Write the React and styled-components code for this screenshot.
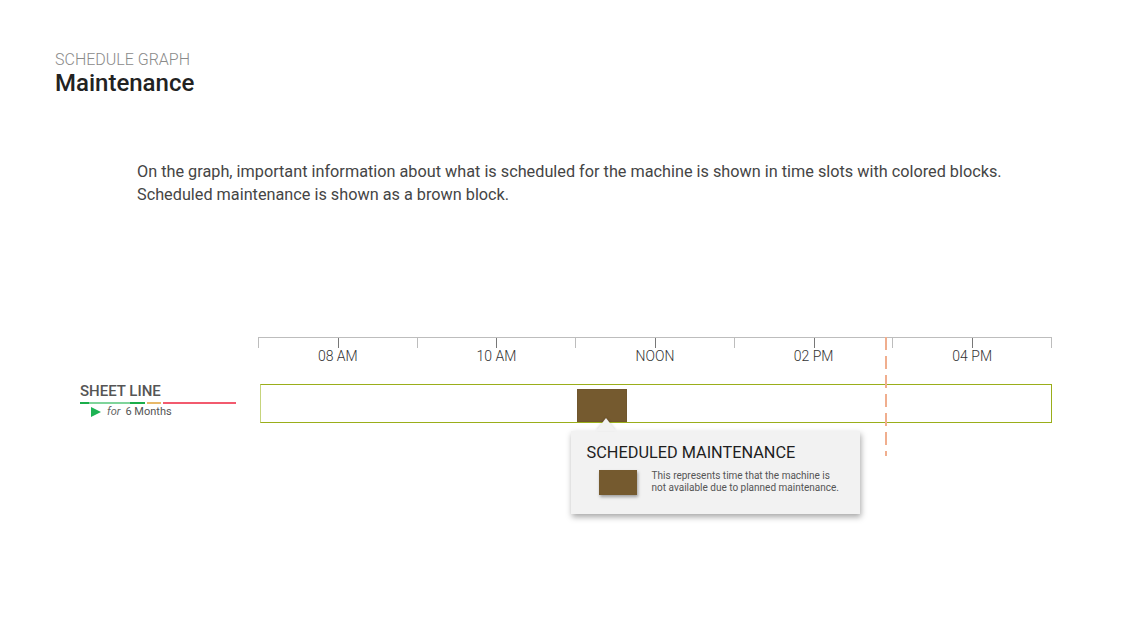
import React from 'react'
import styled, { createGlobalStyle } from 'styled-components'

const GlobalStyle = createGlobalStyle`
    body {
        margin: 0;
        background: #ffffff;
        font-family: Roboto, "Liberation Sans", sans-serif;
    }
`

const Page = styled.div`
    width: 1139px;
    height: 618px;
    padding: 52px 0 0 55px;
    box-sizing: border-box;
    position: relative;
`

const Kicker = styled.div`
    font-size: 16px;
    font-weight: 300;
    color: #8a8a8a;
    line-height: 16px;
`

const Title = styled.h1`
    margin: 3px 0 0;
    font-size: 24px;
    font-weight: 500;
    color: #222;
    line-height: 24px;
`

const Intro = styled.p`
    margin: 65px 0 0 82px;
    font-size: 16.25px;
    line-height: 23px;
    color: #454545;
`

const Chart = styled.div`
    display: flex;
    margin: 131px 0 0 25px;
    position: relative;
`

const LabelCol = styled.div`
    width: 178px;
    padding-top: 46px;
`

const LineName = styled.div`
    font-size: 15px;
    font-weight: 500;
    color: #555;
    line-height: 17px;
    width: 156px;
    padding-bottom: 2px;
`

const Underline = styled.div`
    display: flex;
    gap: 2px;
    height: 2px;
    width: 156px;
`

const Seg = styled.div`
    width: ${p => p.$w}px;
    background: ${p => p.$c};
    position: relative;
`

const SegGlow = styled.div`
    position: absolute;
    left: 9px;
    width: 41px;
    top: 0;
    height: 2px;
    background: #7fd49a;
`

const Duration = styled.div`
    display: flex;
    align-items: center;
    margin: 1px 0 0 11px;
    font-size: 11px;
    color: #555;
    gap: 5px;
`

const Play = styled.span`
    width: 0;
    height: 0;
    border-left: 10px solid #1db354;
    border-top: 5px solid transparent;
    border-bottom: 5px solid transparent;
    margin-right: 1px;
`

const For = styled.i`
    color: #666;
`

const Graph = styled.div`
    width: 794px;
    position: relative;
`

const Axis = styled.div`
    display: flex;
    border-top: 1px solid #bdbdbd;
    border-right: 1px solid #bdbdbd;
    box-sizing: border-box;
    height: 11px;
`

const Slot = styled.div`
    flex: 1;
    position: relative;
    border-left: 1px solid #bdbdbd;
    height: 10px;
`

const CenterTick = styled.div`
    position: absolute;
    left: 50%;
    top: 0;
    width: 1px;
    height: 10px;
    background: #777;
`

const SlotLabel = styled.div`
    position: absolute;
    left: 50%;
    top: 10px;
    transform: translateX(-50%);
    font-size: 14px;
    font-weight: 300;
    color: #333;
    white-space: nowrap;
`

const Row = styled.div`
    margin: 36px 0 0 2px;
    height: 39px;
    box-sizing: border-box;
    border: 1px solid #9aae1a;
    border-left-color: #c6d47c;
    position: relative;
`

const Block = styled.div`
    position: absolute;
    bottom: 0;
    height: 33px;
    background: #755a2f;
    box-shadow: inset 0 0 0 1px rgba(0, 0, 0, 0.04);
`

const NowLine = styled.div`
    position: absolute;
    top: 0;
    width: 2px;
    height: 119px;
    background: repeating-linear-gradient(
        to bottom,
        #f0ae8e 0 13px,
        transparent 13px 19px
    );
`

const Tooltip = styled.div`
    position: absolute;
    top: 94px;
    width: 289px;
    height: 83px;
    box-sizing: border-box;
    background: #f2f2f2;
    box-shadow: 1px 3px 6px rgba(0, 0, 0, 0.35);
    padding: 12px 0 0 16px;
    z-index: 2;

    &::before {
        content: '';
        position: absolute;
        top: -13px;
        left: 25px;
        border-left: 10px solid transparent;
        border-right: 10px solid transparent;
        border-bottom: 13px solid #f2f2f2;
        filter: drop-shadow(0 -1px 1px rgba(0, 0, 0, 0.12));
    }
`

const TipTitle = styled.div`
    font-size: 16.3px;
    color: #1e1e1e;
    line-height: 19px;
`

const TipBody = styled.div`
    display: flex;
    align-items: flex-start;
    margin: 8px 0 0 12px;
    gap: 15px;
`

const Swatch = styled.div`
    width: 38px;
    height: 25px;
    background: #755a2f;
    box-shadow: 1px 2px 3px rgba(0, 0, 0, 0.35);
    flex-shrink: 0;
`

const TipText = styled.div`
    font-size: 10px;
    line-height: 12px;
    color: #555;
    width: 190px;
`

const slots = [
    { label: '08 AM' },
    { label: '10 AM' },
    { label: 'NOON' },
    { label: '02 PM' },
    { label: '04 PM' },
]

// 07:00 -> 17:00 across 794px
const pxPerHour = 794 / 10
const hourToX = h => (h - 7) * pxPerHour

export default function App() {
    const blockX = hourToX(11)
    const nowX = hourToX(14 + 55 / 60)

    return (
        <Page>
            <GlobalStyle />
            <Kicker>SCHEDULE GRAPH</Kicker>
            <Title>Maintenance</Title>
            <Intro>
                On the graph, important information about what is scheduled for the machine is shown in time slots with colored blocks.
                <br />
                Scheduled maintenance is shown as a brown block.
            </Intro>

            <Chart>
                <LabelCol>
                    <LineName>SHEET LINE</LineName>
                    <Underline>
                        <Seg $w={65} $c="#1aad4a"><SegGlow /></Seg>
                        <Seg $w={14} $c="#e8b868" />
                        <Seg $w={73} $c="#f25a6e" />
                    </Underline>
                    <Duration>
                        <Play />
                        <For>for</For>
                        <span>6 Months</span>
                    </Duration>
                </LabelCol>

                <Graph>
                    <Axis>
                        {slots.map(s => (
                            <Slot key={s.label}>
                                <CenterTick />
                                <SlotLabel>{s.label}</SlotLabel>
                            </Slot>
                        ))}
                    </Axis>
                    <Row>
                        <Block style={{ left: blockX - 2, width: 50 }} />
                    </Row>
                    <NowLine style={{ left: nowX - 2 }} />
                    <Tooltip style={{ left: blockX - 5 }}>
                        <TipTitle>SCHEDULED MAINTENANCE</TipTitle>
                        <TipBody>
                            <Swatch />
                            <TipText>
                                This represents time that the machine is not available due to planned maintenance.
                            </TipText>
                        </TipBody>
                    </Tooltip>
                </Graph>
            </Chart>
        </Page>
    )
}
